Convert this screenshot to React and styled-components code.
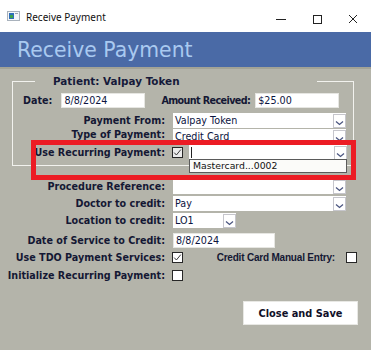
import React from "react";
import styled, { createGlobalStyle } from "styled-components";

const Global = createGlobalStyle`
  html, body { margin: 0; padding: 0; }
  body { background: #b4b4aa; width: 371px; height: 350px; overflow: hidden; }
  * { box-sizing: border-box; }
`;

const Window = styled.div`
  position: relative;
  width: 371px;
  height: 350px;
  background: #b4b4aa;
  font-family: "DejaVu Sans", Verdana, sans-serif;
`;

const TitleBar = styled.div`
  height: 32px;
  background: #ffffff;
  display: flex;
  align-items: center;
  padding-left: 7px;
`;

const TitleText = styled.span`
  font-family: "Noto Sans", "Segoe UI", sans-serif;
  font-size: 10px;
  color: #111;
  margin-left: 6px;
  margin-top: 2px;
`;

const Controls = styled.div`
  margin-left: auto;
  display: flex;
  align-items: center;
  height: 100%;
`;

const CtrlBtn = styled.div`
  width: ${(p) => p.$w}px;
  height: 100%;
  display: flex;
  align-items: center;
  justify-content: center;
  padding-top: 5px;
`;

const Header = styled.div`
  height: 37px;
  background: #4a6aa6;
  border-bottom: 2px solid #a3a396;
  padding-left: 17px;
  display: flex;
  align-items: center;
`;

const HeaderTitle = styled.h1`
  margin: 0;
  font-family: "DejaVu Sans", Verdana, sans-serif;
  font-weight: normal;
  font-size: 20.4px;
  color: #a9c9f0;
  line-height: 1;
  margin-top: 2px;
`;

const Group = styled.fieldset`
  margin: 6px 0 0 12px;
  width: 342px;
  padding: 0 0 5px 0;
  border: 1px solid #f2f2ee;
  min-width: 0;
`;

const Legend = styled.legend`
  margin-left: 22px;
  padding: 0 0 0 18px;
  width: 282px;
  height: 13px;
  line-height: 13px;
  font-weight: bold;
  font-size: 10.4px;
  color: #161a3a;
  white-space: nowrap;
`;

const DateRow = styled.div`
  display: flex;
  align-items: center;
  height: 15px;
  margin-top: 5px;
  padding-left: 10px;
`;

const Label = styled.span`
  font-weight: bold;
  font-size: 9.6px;
  color: #141834;
  white-space: nowrap;
  letter-spacing: ${(p) => p.$ls || 0}px;
  margin-left: ${(p) => p.$ml || 0}px;
`;

const LabelCell = styled(Label)`
  text-align: right;
  position: relative;
  top: ${(p) => p.$dy || 0}px;
`;

const Row = styled.div`
  display: grid;
  grid-template-columns: ${(p) => p.$lw}px 1fr;
  column-gap: 7px;
  align-items: center;
  height: 15px;
  margin-top: ${(p) => p.$mt || 0}px;
  width: ${(p) => (p.$width ? p.$width + "px" : "auto")};
`;

const Input = styled.div`
  width: ${(p) => p.$w}px;
  height: 15px;
  background: #ffffff;
  border: 1px solid #e6e6e2;
  margin-left: ${(p) => p.$ml || 0}px;
  font-size: 9.6px;
  line-height: 13px;
  padding-left: 2px;
  color: #0c1440;
  white-space: nowrap;
  overflow: hidden;
`;

const SelectBox = styled.div`
  position: relative;
  width: ${(p) => p.$w}px;
  height: 15px;
  margin-left: ${(p) => p.$ml ?? 1}px;
  background: #ffffff;
  display: flex;
  align-items: center;
`;

const SelectValue = styled.span`
  flex: 1;
  font-size: 9.6px;
  color: #0c1440;
  padding-left: 2px;
  white-space: nowrap;
  overflow: hidden;
`;

const Caret = styled.span`
  width: 1px;
  height: 11px;
  background: #222;
  margin-left: 2px;
`;

const ArrowBtn = styled.div`
  width: 13px;
  height: 14px;
  border: 1px solid #c6c6cc;
  background: #ffffff;
  display: flex;
  align-items: flex-end;
  justify-content: center;
  padding-bottom: 1px;
`;

const DropList = styled.div`
  position: absolute;
  top: 14px;
  left: 0;
  width: 158px;
  height: 14px;
  background: #fbfbf9;
  border: 1px solid #5a5a5a;
  font-size: 9.3px;
  line-height: 12px;
  color: #111;
  padding-left: 3px;
  z-index: 2;
`;

const Check = styled.div`
  width: 11px;
  height: 11px;
  border: 1px solid #262626;
  background: ${(p) => (p.$gray ? "#ececec" : "#ffffff")};
  display: flex;
  align-items: center;
  justify-content: center;
  flex: none;
`;

const CheckWrap = styled.div`
  display: flex;
  align-items: center;
`;

const Controls2 = styled.div`
  display: flex;
  align-items: center;
  gap: ${(p) => p.$gap || 0}px;
`;

const Outside = styled.div`
  display: flex;
  flex-direction: column;
  gap: 2px;
  margin-top: 13px;
`;

const AltLabel = styled.span`
  margin-left: auto;
  margin-right: 11px;
  font-family: "Liberation Sans", Arial, sans-serif;
  font-weight: bold;
  font-size: 10px;
  letter-spacing: -0.2px;
  color: #141834;
  white-space: nowrap;
`;

const ButtonRow = styled.div`
  display: flex;
  justify-content: flex-end;
  padding-right: 13px;
  margin-top: 18px;
`;

const SaveButton = styled.button`
  width: 115px;
  height: 24px;
  background: #ffffff;
  border: 1px solid #e8e8e4;
  font-family: "DejaVu Sans", Verdana, sans-serif;
  font-weight: bold;
  font-size: 9.8px;
  color: #101028;
  padding: 0;
  cursor: pointer;
`;

const RedFrame = styled.div`
  position: absolute;
  left: 31px;
  top: 140px;
  width: 325px;
  height: 40px;
  border: 5px solid #ec1c24;
  pointer-events: none;
  z-index: 3;
`;

const Chevron = () => (
  <svg width="9" height="6" viewBox="0 0 9 6">
    <polyline points="1,1.5 4.5,4.5 8,1.5" fill="none" stroke="#4b5680" strokeWidth="1.3" />
  </svg>
);

const Tick = () => (
  <svg width="9" height="9" viewBox="0 0 9 9">
    <polyline points="1.2,4.6 3.4,7 7.8,1.6" fill="none" stroke="#3a3a3a" strokeWidth="1" />
  </svg>
);

const Select = ({ w, ml, value, caret, children }) => (
  <SelectBox $w={w} $ml={ml}>
    {caret ? <Caret /> : null}
    <SelectValue>{value}</SelectValue>
    <ArrowBtn>
      <Chevron />
    </ArrowBtn>
    {children}
  </SelectBox>
);

const Checkbox = ({ checked, gray }) => (
  <Check $gray={gray}>{checked ? <Tick /> : null}</Check>
);

const AppIcon = () => (
  <svg width="13" height="10" viewBox="0 0 13 10">
    <rect x="0.5" y="0.5" width="12" height="9" fill="#f4f6f8" stroke="#a9b2bc" />
    <rect x="2" y="2" width="5" height="6" fill="#2f6fb8" />
    <rect x="3" y="4" width="3" height="3" fill="#3fa44c" />
    <rect x="8" y="2" width="3" height="1" fill="#9aa4b0" />
  </svg>
);

export default function App() {
  return (
    <>
      <Global />
      <Window>
        <TitleBar>
          <AppIcon />
          <TitleText>Receive Payment</TitleText>
          <Controls>
            <CtrlBtn $w={36}>
              <svg width="10" height="10" viewBox="0 0 10 10">
                <line x1="0" y1="5.5" x2="10" y2="5.5" stroke="#222" strokeWidth="1" />
              </svg>
            </CtrlBtn>
            <CtrlBtn $w={36}>
              <svg width="10" height="10" viewBox="0 0 10 10">
                <rect x="1.5" y="1.5" width="8" height="8" fill="none" stroke="#222" strokeWidth="1" />
              </svg>
            </CtrlBtn>
            <CtrlBtn $w={36}>
              <svg width="10" height="10" viewBox="0 0 10 10">
                <line x1="1" y1="1" x2="9" y2="9" stroke="#222" strokeWidth="1" />
                <line x1="9" y1="1" x2="1" y2="9" stroke="#222" strokeWidth="1" />
              </svg>
            </CtrlBtn>
          </Controls>
        </TitleBar>
        <Header>
          <HeaderTitle>Receive Payment</HeaderTitle>
        </Header>

        <Group>
          <Legend>Patient: Valpay Token</Legend>
          <DateRow>
            <Label>Date:</Label>
            <Input $w={84} $ml={9}>8/8/2024</Input>
            <Label $ls={-0.6} $ml={16}>Amount Received:</Label>
            <Input $w={84} $ml={5}>$25.00</Input>
          </DateRow>
          <Row $lw={152} $mt={5}>
            <LabelCell>Payment From:</LabelCell>
            <Select w={173} value="Valpay Token" />
          </Row>
          <Row $lw={152} $mt={1}>
            <LabelCell $dy={-2}>Type of Payment:</LabelCell>
            <Select w={173} value="Credit Card" />
          </Row>
          <Row $lw={152} $mt={1}>
            <LabelCell>Use Recurring Payment:</LabelCell>
            <Controls2 $gap={6}>
              <Checkbox checked gray />
              <Select w={158} ml={0} value="" caret>
                <DropList>Mastercard...0002</DropList>
              </Select>
            </Controls2>
          </Row>
        </Group>

        <Outside>
          <Row $lw={165}>
            <LabelCell>Procedure Reference:</LabelCell>
            <Select w={173} value="" />
          </Row>
          <Row $lw={165}>
            <LabelCell>Doctor to credit:</LabelCell>
            <Select w={173} value="Pay" />
          </Row>
          <Row $lw={165}>
            <LabelCell>Location to credit:</LabelCell>
            <Select w={63} value="LO1" />
          </Row>
          <Row $lw={165} $mt={3}>
            <LabelCell>Date of Service to Credit:</LabelCell>
            <Input $w={102} $ml={1}>8/8/2024</Input>
          </Row>
          <Row $lw={165} $width={357}>
            <LabelCell>Use TDO Payment Services:</LabelCell>
            <CheckWrap>
              <Checkbox checked />
              <AltLabel>Credit Card Manual Entry:</AltLabel>
              <Checkbox />
            </CheckWrap>
          </Row>
          <Row $lw={165} $mt={1}>
            <LabelCell>Initialize Recurring Payment:</LabelCell>
            <CheckWrap>
              <Checkbox />
            </CheckWrap>
          </Row>
        </Outside>

        <ButtonRow>
          <SaveButton>Close and Save</SaveButton>
        </ButtonRow>

        <RedFrame />
      </Window>
    </>
  );
}
